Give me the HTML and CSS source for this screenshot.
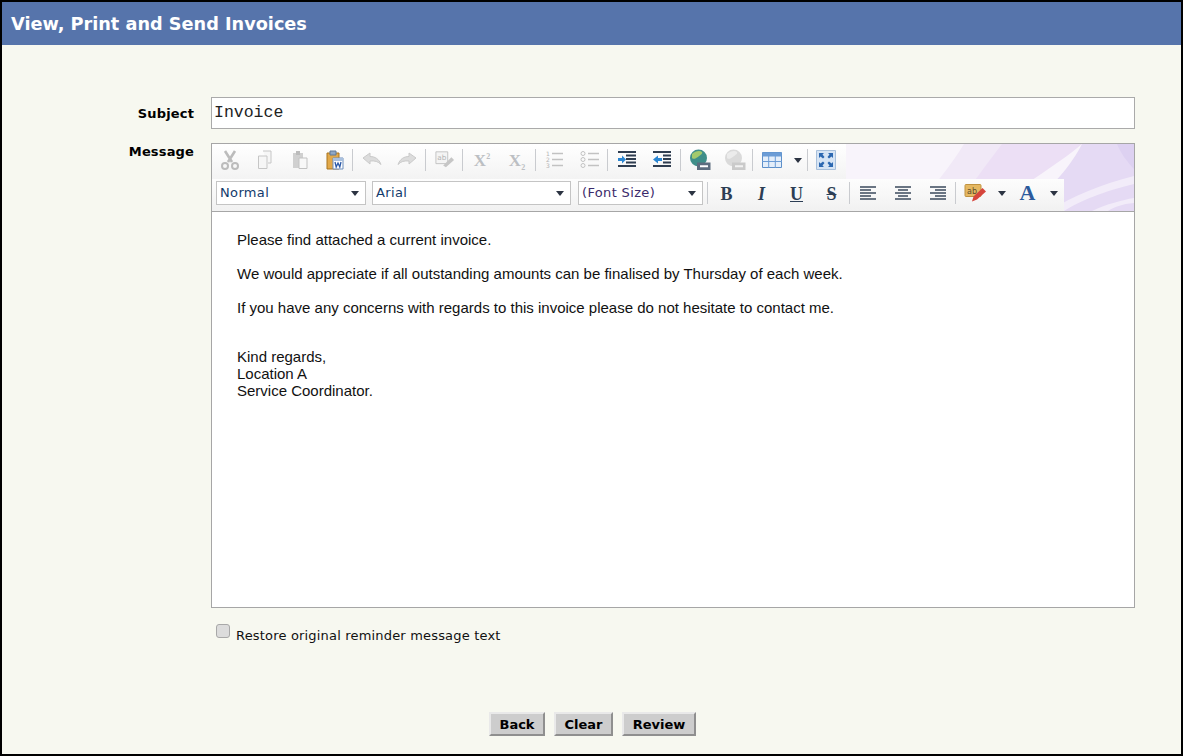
FILE: index.html
```html
<!DOCTYPE html>
<html lang="en">
<head>
<meta charset="utf-8">
<title>View, Print and Send Invoices</title>
<link rel="stylesheet" href="styles.css">
</head>
<body>
<div class="page">
  <h1 class="title">View, Print and Send Invoices</h1>
  <form class="form">
    <div class="row row-subject">
      <label class="label">Subject</label>
      <div class="subject">Invoice</div>
    </div>
    <div class="row row-message">
      <label class="label label-msg">Message</label>
      <div class="editor">
        <div class="toolbars">
          <svg class="waves" viewBox="0 0 922 67" preserveAspectRatio="none" aria-hidden="true">
            <path d="M634 0H922V67H634Z" fill="#f8f4fb"/>
            <path d="M752 0H860C830 18 800 28 770 40L740 67H700C720 45 740 20 752 0Z" fill="#f1e9f7"/>
            <path d="M790 0H870C840 25 810 40 780 67H740C760 40 775 20 790 0Z" fill="#ecdff5"/>
            <path d="M870 0H922V67H810C840 45 860 20 870 0Z" fill="#e5daf4"/>
            <path d="M838 67C860 52 890 40 922 32V40C890 48 870 56 852 67Z" fill="#f2ecf9"/>
            <path d="M880 67C895 60 910 56 922 54V59C910 60 902 63 896 67Z" fill="#f2ecf9"/>
            <path d="M905 0H922V25C915 18 908 8 905 0Z" fill="#ddd1f1"/>
          </svg>
          <div class="tools tools-top">
            <span class="btn"><svg viewBox="0 0 20 20"><path d="M5 1l7 11M15 1L8 12" stroke="#bcbcbc" stroke-width="2.600" fill="none"/><circle cx="5" cy="16" r="3" fill="none" stroke="#bcbcbc" stroke-width="2"/><circle cx="15" cy="16" r="3" fill="none" stroke="#bcbcbc" stroke-width="2"/></svg></span>
            <span class="btn"><svg viewBox="0 0 20 20"><path d="M8 1h8v12h-3M3.500 6h8.500v12.500h-8.500z" fill="#f6f6f6" stroke="#c6c6c6"/></svg></span>
            <span class="btn"><svg viewBox="0 0 20 20"><path d="M3 3h10v15H3z" fill="#d0d0d0"/><path d="M6 1h4v4H6z" fill="#bcbcbc"/><path d="M9 8h8v10.500H9z" fill="#f8f8f8" stroke="#c2c2c2"/></svg></span>
            <span class="btn"><svg viewBox="0 0 20 20"><path d="M2 3h12v16H2z" fill="#e2a94a" stroke="#a9741f"/><path d="M5 1h6v4H5z" fill="#8fa7c4" stroke="#5f7896"/><path d="M8 8h10v11H8z" fill="#fff" stroke="#6f8fbc"/><path d="M8 8h10v3H8z" fill="#a9c0de"/><path d="M10 12l1.200 5 1.800-4 1.800 4 1.200-5" stroke="#2b5aa8" stroke-width="1.300" fill="none"/></svg></span>
            <i class="sep"></i>
            <span class="btn"><svg viewBox="0 0 20 20"><path d="M1 8l7-5v3.500c5 0 9 2.500 11 8-3-3-6-4-11-3.500V14z" fill="#dcdcdc" stroke="#cacaca"/></svg></span>
            <span class="btn"><svg viewBox="0 0 20 20"><path d="M19 8l-7-5v3.500c-5 0-9 2.500-11 8 3-3 6-4 11-3.500V14z" fill="#dcdcdc" stroke="#cacaca"/></svg></span>
            <i class="sep"></i>
            <span class="btn"><svg viewBox="0 0 22 20"><path d="M1 1h13v13H1z" fill="#f4f4f4" stroke="#c0c0c0"/><text x="2.500" y="10" class="tiny">ab</text><path d="M9 16l9-9 3 3-9 8z" fill="#c6c6c6"/></svg></span>
            <i class="sep"></i>
            <span class="btn glyph"><span>X<sup class="mini">2</sup></span></span>
            <span class="btn glyph"><span>X<sub class="mini">2</sub></span></span>
            <i class="sep"></i>
            <span class="btn"><svg viewBox="0 0 20 20"><text x="1" y="6" class="tiny tiny-g">1</text><text x="1" y="12" class="tiny tiny-g">2</text><text x="1" y="18" class="tiny tiny-g">3</text><path d="M7 3.500h11M7 9.500h11M7 15.500h11" stroke="#c2c2c2" stroke-width="1.500"/></svg></span>
            <span class="btn"><svg viewBox="0 0 20 20"><circle cx="3" cy="3.500" r="2" fill="none" stroke="#c2c2c2"/><circle cx="3" cy="9.500" r="2" fill="none" stroke="#c2c2c2"/><circle cx="3" cy="15.500" r="2" fill="none" stroke="#c2c2c2"/><path d="M8 3.500h11M8 9.500h11M8 15.500h11" stroke="#c2c2c2" stroke-width="1.500"/></svg></span>
            <i class="sep"></i>
            <span class="btn"><svg viewBox="0 0 20 20"><path d="M1 2h18M9 5.500h10M9 9h10M9 12.500h10M1 16h18" stroke="#2f3d50" stroke-width="1.900"/><path d="M1 8h4V5.500l4 4-4 4V11H1z" fill="#2b86d2"/></svg></span>
            <span class="btn"><svg viewBox="0 0 20 20"><path d="M1 2h18M11 5.500h8M11 9h8M11 12.500h8M1 16h18" stroke="#2f3d50" stroke-width="1.900"/><path d="M10 8H6V5.500l-5 4 5 4V11h4z" fill="#2b86d2"/></svg></span>
            <i class="sep"></i>
            <span class="btn btn-globe"><svg viewBox="0 0 22 22"><circle cx="9.500" cy="9" r="8.500" fill="#3f8f8a"/><path d="M3 5c3-3 8-4 10-2 1 2-2 3-4 5-2 1-4 3-6 1z" fill="#a3c96c"/><path d="M8 13.500h13.500v7.500H8z" fill="#5d6d7f"/><path d="M11 17.250h8" stroke="#fff" stroke-width="2"/></svg></span>
            <span class="btn btn-globe"><svg viewBox="0 0 22 22"><circle cx="9.500" cy="9" r="8.500" fill="#dadada"/><path d="M3 5c3-3 8-4 10-2 1 2-2 3-4 5-2 1-4 3-6 1z" fill="#ebebeb"/><path d="M8 13.500h13.500v7.500H8z" fill="#cacaca"/><path d="M11 17.250h8" stroke="#f2f2f2" stroke-width="2"/></svg></span>
            <i class="sep"></i>
            <span class="btn"><svg viewBox="0 0 20 16" class="wide"><path d="M.500.500h19v15H.500z" fill="#e4eefa" stroke="#5d8fc9"/><path d="M.500.500h19v4H.500z" fill="#6b9cd6"/><path d="M0 9.500h20M6.700 4v12M13.300 4v12" stroke="#6b9cd6"/></svg></span>
            <span class="btn-arrow"><i class="tri"></i></span>
            <i class="sep sep-tight"></i>
            <span class="btn"><svg viewBox="0 0 20 20"><path d="M.500.500h19v19H.500z" fill="#d6e4f4" stroke="#a8c0db"/><path d="M3 3h5L6.500 4.500 8.500 7 7 8.500 4.500 6.500 3 8zM17 3v5l-1.500-1.500L13 8.500 11.500 7l2-2.500L12 3zM3 17v-5l1.500 1.500L7 11.500 8.500 13l-2 2.500L8 17zM17 17h-5l1.500-1.500L11.500 13l1.500-1.500 2.500 2L17 12z" fill="#2c68b1"/></svg></span>
          </div>
          <div class="tools tools-bottom">
            <span class="combo combo-format"><span>Normal</span><i class="tri"></i></span>
            <span class="combo combo-font"><span>Arial</span><i class="tri"></i></span>
            <span class="combo combo-size"><span class="size-text">(Font Size)</span><i class="tri"></i></span>
            <i class="sep sep-size"></i>
            <span class="fmt fmt-b">B</span>
            <span class="fmt fmt-i">I</span>
            <span class="fmt fmt-u">U</span>
            <span class="fmt fmt-s">S</span>
            <i class="sep sep-2"></i>
            <span class="btn btn-align"><svg viewBox="0 0 16 14"><path d="M0 1h16M0 4h11M0 7h16M0 10h11M0 13h16" stroke="#3b4a5c" stroke-width="1.700"/></svg></span>
            <span class="btn btn-align"><svg viewBox="0 0 16 14"><path d="M0 1h16M3 4h10M0 7h16M3 10h10M0 13h16" stroke="#3b4a5c" stroke-width="1.700"/></svg></span>
            <span class="btn btn-align"><svg viewBox="0 0 16 14"><path d="M0 1h16M5 4h11M0 7h16M5 10h11M0 13h16" stroke="#3b4a5c" stroke-width="1.700"/></svg></span>
            <i class="sep sep-2"></i>
            <span class="btn btn-mark"><svg viewBox="0 0 22 18"><path d="M1 1.500q0-1 1-1h14q1 0 1 1v10q0 1-1 1H2q-1 0-1-1z" fill="#e5b862" stroke="#c09240"/><text x="3" y="10" class="tiny tiny-d">ab</text><path d="M8 17.500l1.500-5 9-8.500 3.500 3.500-9 8z" fill="#d6443c"/></svg></span>
            <span class="btn-arrow btn-arrow-mark"><i class="tri"></i></span>
            <span class="fmt fmt-a">A</span>
            <span class="btn-arrow btn-arrow-a"><i class="tri"></i></span>
          </div>
        </div>
        <div class="content">
          <p>Please find attached a current invoice.</p>
          <p>We would appreciate if all outstanding amounts can be finalised by Thursday of each week.</p>
          <p>If you have any concerns with regards to this invoice please do not hesitate to contact me.</p>
          <p class="sign">Kind regards,<br>Location A<br>Service Coordinator.</p>
        </div>
      </div>
    </div>
    <div class="restore">
      <input class="check" type="checkbox" id="restore">
      <label class="restore-label" for="restore">Restore original reminder message text</label>
    </div>
    <div class="actions">
      <button class="action action-back" type="button">Back</button>
      <button class="action action-clear" type="button">Clear</button>
      <button class="action action-review" type="button">Review</button>
    </div>
  </form>
</div>
</body>
</html>
```
FILE: styles.css
```css
* { box-sizing: border-box; }
html, body { margin: 0; padding: 0; }
body { width: 1183px; height: 756px; overflow: hidden; font-family: "DejaVu Sans", Verdana, sans-serif; }
.page {
  width: 1183px; height: 756px;
  border: 2px solid #000;
  background: #f7f8f0;
  display: flex; flex-direction: column;
}
.title {
  margin: 0; height: 43px; padding: 0 0 0 9px;
  background: #5674ab; color: #fff;
  font-size: 17.700px; font-weight: 700; line-height: 44px;
}
.form { flex: 1; display: flex; flex-direction: column; padding: 52px 46px 0 0; }
.row { display: flex; }
.label {
  width: 192px; flex: none; padding-top: 9px; text-align: right;
  font-size: 13px; font-weight: 700; color: #000; line-height: 16px; letter-spacing: .15px;
}
.label-msg { padding-top: 1px; }
.subject {
  margin-left: 17px; flex: 1; height: 32px;
  border: 1px solid #aaa; background: #fff;
  padding: 0 2px; line-height: 30px;
  font-family: "Liberation Mono", monospace; font-size: 16.500px; color: #222;
}
.row-message { margin-top: 14px; }
.editor {
  margin-left: 17px; flex: 1; height: 465px;
  border: 1px solid #a6a6a6; background: #fff;
  display: flex; flex-direction: column;
}
.toolbars {
  position: relative; height: 68px; flex: none;
  border-bottom: 1px solid #a6a6a6;
  background: #f8f5fb;
  overflow: hidden;
}
.waves { position: absolute; inset: 0; width: 100%; height: 100%; }
.tools { position: relative; display: flex; align-items: flex-start; }
.tools-top {
  width: 634px; height: 35px; padding-top: 1px;
  background: linear-gradient(#fff, #f3f3f3);
}
.tools-bottom {
  width: 852px; height: 32px; padding: 2px 0 0 4px;
  background: linear-gradient(#fdfdfd, #f1f1f1);
}
.btn { width: 35px; height: 30px; flex: none; display: flex; align-items: center; justify-content: center; }
.btn svg { width: 20px; height: 20px; display: block; }
.btn svg.wide { height: 16px; }
.btn-globe svg { width: 22px; height: 22px; }
.sep { width: 1px; height: 22px; margin-top: 4px; background: #c9cbcf; flex: none; margin-right: 1.500px; }
.sep-tight { margin-right: 1px; }
.sep-size { margin: 1px 0 0 4px; }
.sep-2 { margin: 1px 0 0; }
.glyph {
  font-family: "Liberation Serif", serif; font-weight: 700; font-size: 17px;
  color: #bcbfc3; line-height: 1;
}
.mini { font-size: 8px; line-height: 0; }
.tiny { font-family: "DejaVu Sans", sans-serif; font-size: 8px; fill: #b4b4b4; }
.tiny-g { font-size: 6px; }
.tiny-d { fill: #5b4a2a; }
.btn-arrow { width: 17px; height: 30px; flex: none; display: flex; align-items: center; justify-content: center; }
.tri {
  display: block; width: 0; height: 0;
  border-left: 4.500px solid transparent; border-right: 4.500px solid transparent;
  border-top: 5px solid #2c3442;
}
.combo {
  height: 24px; flex: none;
  display: flex; align-items: center; justify-content: space-between;
  border: 1px solid #c4c4c4; background: #fff;
  padding: 0 6px 2px 3px;
  font-size: 13px; letter-spacing: .35px; color: #123a6b;
}
.combo .tri { margin-top: 2px; }
.combo-format { width: 150px; }
.combo-font { width: 199px; margin-left: 6px; }
.combo-size { width: 125px; margin-left: 7px; }
.size-text { color: #3b2a6b; }
.fmt {
  width: 35px; height: 26px; flex: none; text-align: center;
  font-family: "Liberation Serif", serif; font-weight: 700; font-size: 18px; line-height: 26px;
  color: #2c3e55;
}
.fmt-b { margin-left: 1px; }
.fmt-i { font-style: italic; }
.fmt-u { text-decoration: underline; }
.fmt-s { text-decoration: line-through; }
.fmt-a { width: 35px; font-size: 22px; line-height: 23px; color: #2b5a9c; }
.btn-align { height: 24px; }
.btn-align svg { width: 16px; height: 14px; }
.btn-mark { width: 37px; height: 24px; }
.btn-mark svg { width: 22px; height: 18px; }
.btn-arrow-mark, .btn-arrow-a { width: 17px; height: 24px; }
.content {
  flex: 1; padding: 19px 25px 0;
  font-family: "Liberation Sans", Arial, sans-serif; font-size: 15px; line-height: 17px; color: #111;
}
.content p { margin: 0 0 17px; }
.sign { padding-top: 15px; }
.restore { display: flex; align-items: flex-start; margin: 16px 0 0 214px; height: 20px; }
.check {
  appearance: none; -webkit-appearance: none;
  width: 14px; height: 14px; margin: 0 6px 0 0; flex: none;
  border: 1px solid #a8a8a8; border-radius: 3px; background: #dcdcdc;
}
.restore-label { font-size: 13px; line-height: 16px; margin-top: 4px; color: #111; letter-spacing: .18px; }
.actions { display: flex; gap: 9px; margin: auto 0 18px 487px; }
.action {
  height: 24px; padding: 0; font-family: inherit;
  font-size: 13px; font-weight: 700; color: #000;
  background: #cdcdcd;
  border: 2px solid; border-color: #e9e9e9 #8f8f8f #8f8f8f #e9e9e9;
}
.action-back { width: 56px; }
.action-clear { width: 59px; }
.action-review { width: 74px; }
```
